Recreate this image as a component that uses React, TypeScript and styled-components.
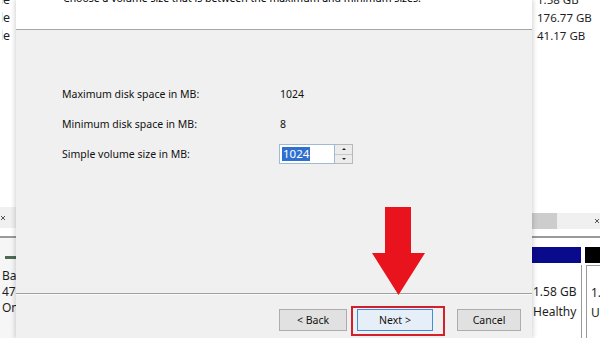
import React from "react";
import styled, { createGlobalStyle } from "styled-components";

const GlobalStyle = createGlobalStyle`
  html, body { margin: 0; padding: 0; width: 600px; height: 338px; overflow: hidden; background: #fff; }
  #root { width: 600px; height: 338px; }
`;

const FONT = `"Noto Sans", "Open Sans", "Liberation Sans", sans-serif`;

const Desktop = styled.div`
  position: relative;
  display: flex;
  width: 600px;
  height: 338px;
  overflow: hidden;
  background: #fff;
  font-family: ${FONT};
  color: #1a1a1a;
`;

/* ---------- background Disk Management pieces ---------- */
const SideStrip = styled.div<{ $w: number }>`
  width: ${(p) => p.$w}px;
  flex: none;
  display: flex;
  flex-direction: column;
  overflow: hidden;
  background: #fff;
`;

const VolumeList = styled.div<{ $align: "left" | "right" }>`
  height: 216px;
  margin-top: -9px;
  flex: none;
  display: flex;
  flex-direction: column;
  align-items: ${(p) => (p.$align === "right" ? "flex-end" : "flex-start")};
  padding-left: ${(p) => (p.$align === "left" ? 5 : 0)}px;
  padding-right: ${(p) => (p.$align === "right" ? 6 : 0)}px;
  font-size: ${(p) => (p.$align === "right" ? 12.5 : 11.5)}px;
  line-height: 18px;
  white-space: nowrap;
  color: #1e1e1e;
`;

const ClippedCell = styled.div`
  width: 8px;
  overflow: hidden;
  display: flex;
  justify-content: flex-end;
`;

const ScrollBar = styled.div<{ $top: number; $h: number }>`
  margin-top: ${(p) => p.$top}px;
  height: ${(p) => p.$h}px;
  flex: none;
  background: #f0f0f0;
  display: flex;
  align-items: center;
  justify-content: space-between;
`;

const ScrollThumb = styled.div`
  width: 25px;
  height: 16px;
  background: #cdcdcd;
`;

const PaneDivider = styled.div<{ $top: number }>`
  margin-top: ${(p) => p.$top}px;
  height: 2px;
  flex: none;
  background: #9a9a9a;
`;

const DiskArea = styled.div<{ $bg: string }>`
  flex: 1;
  background: ${(p) => p.$bg};
  display: flex;
  flex-direction: column;
`;

const GreenDash = styled.div`
  margin: 18px 0 0 5px;
  width: 11px;
  height: 3px;
  background: #4d6b55;
`;

const DiskLabel = styled.div`
  margin-top: 9px;
  padding-left: 2px;
  font-size: 12px;
  line-height: 16px;
  white-space: nowrap;
  color: #1e1e1e;
`;

const BarRow = styled.div`
  margin-top: 9px;
  display: flex;
  gap: 4px;
  height: 16px;
`;

const Bar = styled.div<{ $w: number; $c: string }>`
  width: ${(p) => p.$w}px;
  flex: none;
  background: ${(p) => p.$c};
`;

const PartRow = styled.div`
  flex: 1;
  display: flex;
  gap: 4px;
  margin-top: 2px;
`;

const Partition = styled.div<{ $w: number; $edge: "right" | "left" }>`
  width: ${(p) => p.$w}px;
  flex: none;
  padding: 17px 0 0 ${(p) => (p.$edge === "left" ? 4 : 1)}px;
  ${(p) =>
    p.$edge === "right"
      ? "border-right: 1px solid #9a9a9a;"
      : "border-left: 1px solid #9a9a9a; border-top: 1px solid #9a9a9a;"}
  font-size: 12px;
  line-height: 20px;
  white-space: nowrap;
  color: #1e1e1e;
`;

/* ---------- wizard dialog ---------- */
const Dialog = styled.div`
  width: 516px;
  flex: none;
  display: flex;
  flex-direction: column;
  background: #f0f0f0;
  box-shadow: -2px 0 4px rgba(0, 0, 0, 0.12), 2px 0 4px rgba(0, 0, 0, 0.12);
  z-index: 1;
`;

const Header = styled.div`
  height: 29px;
  flex: none;
  background: #fff;
  padding-left: 47px;
  border-bottom: 1px solid #a6a6a6;
  font-size: 10.5px;
  line-height: 14px;
  color: #000;
  overflow: hidden;
`;

const HeaderText = styled.div`
  margin-top: -9px;
  white-space: nowrap;
`;

const Body = styled.div`
  flex: 1;
  padding: 49px 0 0 46px;
  border-bottom: 1px solid #a0a0a0;
`;

const Form = styled.div`
  display: grid;
  grid-template-columns: 218px auto;
  grid-auto-rows: 30px;
  align-items: center;
  font-size: 10.5px;
  color: #111;
`;

const Label = styled.div`
  white-space: nowrap;
`;

const Value = styled.div``;

const Spin = styled.div`
  display: flex;
  width: 74px;
  height: 20px;
  margin-left: -1px;
`;

const SpinInput = styled.div`
  width: 53px;
  height: 18px;
  border: 1px solid #9fbad8;
  background: #fff;
  display: flex;
  align-items: center;
  padding-left: 2px;
`;

const Selected = styled.span`
  background: #2f6fcf;
  color: #fff;
  font-size: 11.5px;
  line-height: 14px;
  padding: 0 1px;
`;

const SpinButtons = styled.div`
  width: 17px;
  display: flex;
  flex-direction: column;
  border: 1px solid #b8b8b8;
  border-left: none;
`;

const SpinBtn = styled.div<{ $dir: "up" | "down" }>`
  flex: 1;
  background: #ececec;
  display: flex;
  align-items: center;
  justify-content: center;
  ${(p) => (p.$dir === "up" ? "border-bottom: 1px solid #c8c8c8;" : "")}
  &::after {
    content: "";
    width: 0;
    height: 0;
    border-left: 2px solid transparent;
    border-right: 2px solid transparent;
    ${(p) =>
      p.$dir === "up"
        ? "border-bottom: 2px solid #222;"
        : "border-top: 2px solid #222;"}
  }
`;

const Footer = styled.div`
  height: 43px;
  flex: none;
  border-top: 1px solid #fbfbfb;
  display: flex;
  align-items: center;
  padding: 0 10px 0 263px;
`;

const Button = styled.div<{ $w: number; $primary?: boolean; $gap: number }>`
  position: relative;
  width: ${(p) => p.$w}px;
  height: 22px;
  margin-left: ${(p) => p.$gap}px;
  margin-top: 6px;
  box-sizing: border-box;
  display: flex;
  align-items: center;
  justify-content: center;
  font-size: 10.5px;
  color: #111;
  background: ${(p) => (p.$primary ? "#e6eef7" : "#e1e1e1")};
  border: 1px solid ${(p) => (p.$primary ? "#3d8ee0" : "#adadad")};
`;

const Highlight = styled.div`
  position: absolute;
  left: -7px;
  top: -4px;
  width: 94px;
  height: 30px;
  box-sizing: border-box;
  border: 2.5px solid #d3202a;
  pointer-events: none;
`;

const ArrowSvg = styled.svg`
  position: absolute;
  left: 372px;
  top: 207px;
  z-index: 2;
`;

const ScrollGlyph = ({ w }: { w: number }) => (
  <svg width={w} height="8" viewBox={`0 0 ${w} 8`}>
    <path d="M1 2 L5 6 M5 2 L1 6" stroke="#555" strokeWidth="1" fill="none" />
  </svg>
);

export default function App() {
  return (
    <>
      <GlobalStyle />
      <Desktop>
        <SideStrip $w={16}>
          <VolumeList $align="right">
            <ClippedCell>Simple</ClippedCell>
            <ClippedCell>Simple</ClippedCell>
            <ClippedCell>Simple</ClippedCell>
          </VolumeList>
          <ScrollBar $top={0} $h={21}>
            <ScrollGlyph w={8} />
          </ScrollBar>
          <PaneDivider $top={8} />
          <DiskArea $bg="#f6f6f6">
            <GreenDash />
            <DiskLabel>Basic<br />476.81 GB<br />Online</DiskLabel>
          </DiskArea>
        </SideStrip>

        <Dialog>
          <Header>
            <HeaderText>
              Choose a volume size that is between the maximum and minimum sizes.
            </HeaderText>
          </Header>
          <Body>
            <Form>
              <Label>Maximum disk space in MB:</Label>
              <Value>1024</Value>
              <Label>Minimum disk space in MB:</Label>
              <Value>8</Value>
              <Label>Simple volume size in MB:</Label>
              <Spin>
                <SpinInput>
                  <Selected>1024</Selected>
                </SpinInput>
                <SpinButtons>
                  <SpinBtn $dir="up" />
                  <SpinBtn $dir="down" />
                </SpinButtons>
              </Spin>
            </Form>
          </Body>
          <Footer>
            <Button $w={68} $gap={0}>&lt; Back</Button>
            <Button $w={76} $gap={10} $primary>
              Next &gt;
              <Highlight />
            </Button>
            <Button $w={64} $gap={24}>Cancel</Button>
          </Footer>
        </Dialog>

        <SideStrip $w={68}>
          <VolumeList $align="left">
            <div>1.58 GB</div>
            <div>176.77 GB</div>
            <div>41.17 GB</div>
          </VolumeList>
          <ScrollBar $top={6} $h={16}>
            <ScrollThumb />
            <ScrollGlyph w={6} />
          </ScrollBar>
          <PaneDivider $top={7} />
          <DiskArea $bg="#fff">
            <BarRow>
              <Bar $w={49} $c="#0a0a8c" />
              <Bar $w={20} $c="#000" />
            </BarRow>
            <PartRow>
              <Partition $w={48} $edge="right">
                1.58 GB<br />Healthy
              </Partition>
              <Partition $w={20} $edge="left">
                1.<br />U
              </Partition>
            </PartRow>
          </DiskArea>
        </SideStrip>

        <ArrowSvg width="54" height="89" viewBox="0 0 54 89">
          <polygon points="13,0 39,0 39,46 53,46 26.5,88 0,46 13,46" fill="#e8131d" />
        </ArrowSvg>
      </Desktop>
    </>
  );
}
